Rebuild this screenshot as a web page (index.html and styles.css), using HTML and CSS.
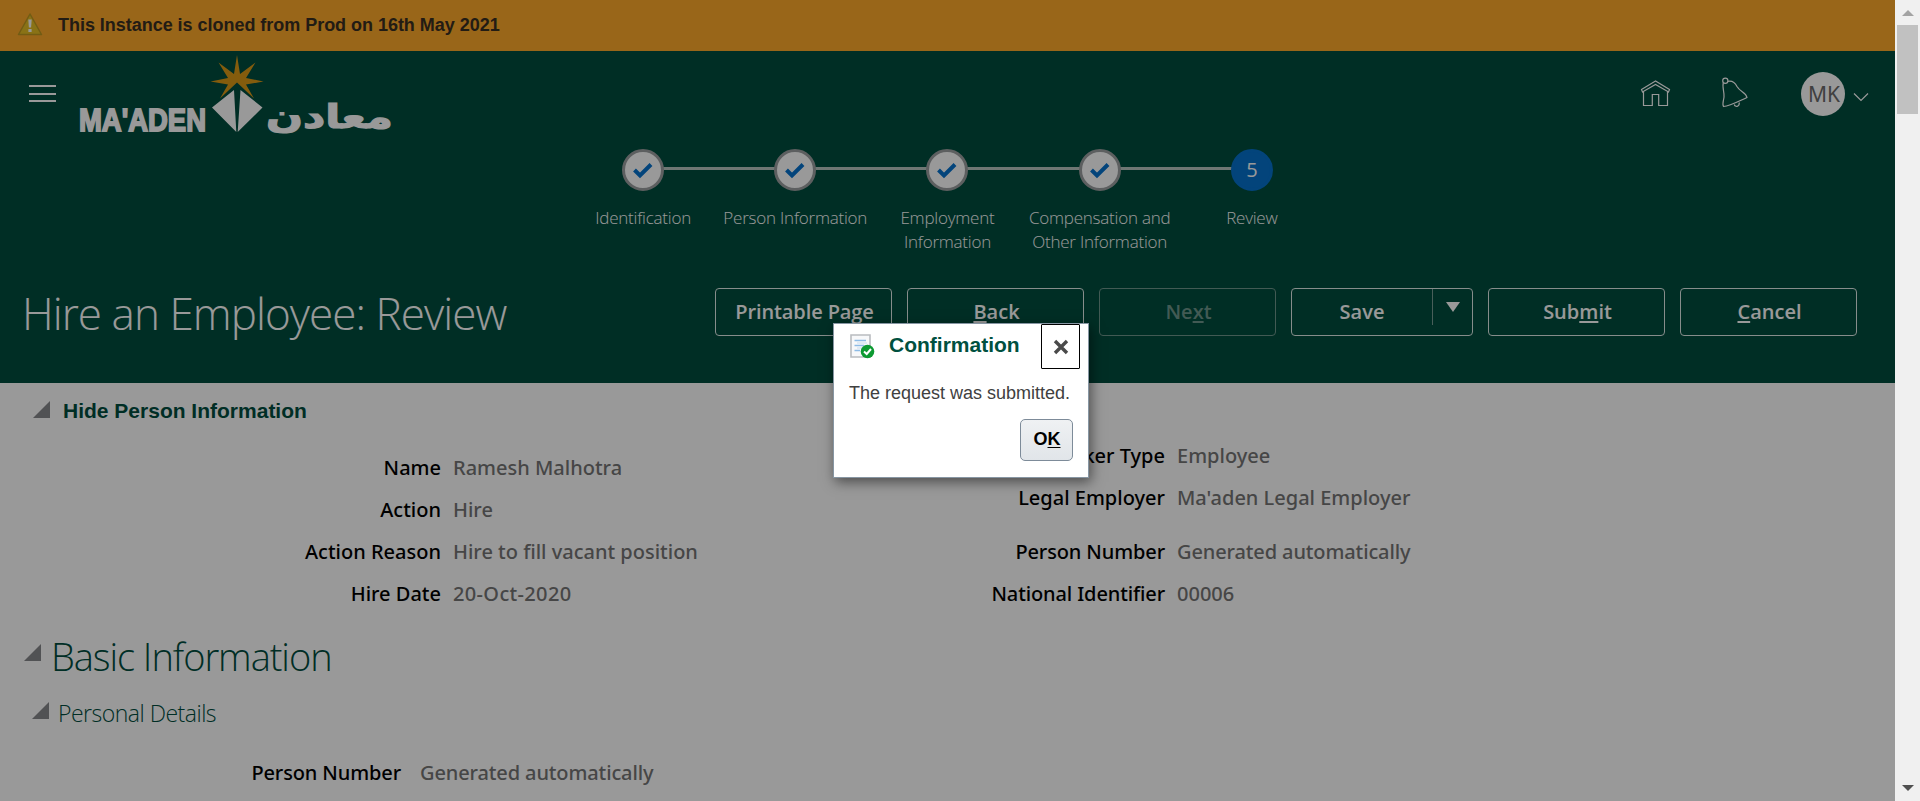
FILE: index.html
```html
<!DOCTYPE html>
<html lang="en">
<head>
<meta charset="utf-8">
<title>Hire an Employee: Review</title>
<link rel="stylesheet" href="styles.css">
</head>
<body>
<div class="window">
  <div class="page">
    <div class="banner">
      <svg class="warn" width="26" height="24" viewBox="0 0 26 24"><path d="M13 2 L24.5 22.5 H1.5 Z" fill="#e5bf25" stroke="#bf9a22" stroke-width="1.5" stroke-linejoin="round"/><path d="M11.3 7.5h3.4l-.6 8h-2.2z" fill="#fff"/><rect x="11.4" y="17" width="3.2" height="3" fill="#fff"/></svg>
      <span>This Instance is cloned from Prod on 16th May 2021</span>
    </div>
    <header class="header">
      <div class="topbar">
        <div class="menu"><i></i><i></i><i></i></div>
        <svg class="logo" width="324" height="90" viewBox="76 52 324 90">
          <path fill="#dd9a17" d="M237 55 L240 74 L255.500 62.500 L246 78 L263.500 81.500 L246 84.500 L254 98.500 L237 82.500 L220 98.500 L228 84.500 L210.500 81.500 L228 78 L218.500 62.500 L234 74 Z"/>
          <path fill="#fff" d="M234 90 L212 107.500 L236.300 132 Z M240.500 90 L262.500 107.500 L237.700 132 Z"/>
          <text class="logo-en" x="79" y="131" textLength="127" lengthAdjust="spacingAndGlyphs">MA'ADEN</text>
          <text class="logo-ar" x="266" y="127.500" textLength="127" lengthAdjust="spacingAndGlyphs">معادن</text>
        </svg>
        <div class="tools">
          <svg class="home" width="32" height="30" viewBox="1640 78 32 30"><path d="M1655.500 81 L1641.500 89.500 L1642.500 92 L1655.500 84.500 L1668.500 92 L1669.500 89.500 Z M1643.500 91.500 V105.500 H1652.300 V94.500 H1658.700 V105.500 H1667.500 V91.500"/></svg>
          <svg class="bell" width="32" height="32" viewBox="1720 77 32 32"><circle cx="1725.300" cy="80.700" r="2.600"/><path d="M1723.300 83 C1722 87 1724.500 92 1724 97 C1723.500 101 1722 104 1723.500 106.500 C1730 106 1738 101.500 1747 97.500 C1746 92 1740 92 1737 86.500 C1735 82.500 1732 80.500 1728 81.300 M1734.300 104.500 C1735 107.500 1739.500 107 1739.300 102.500"/></svg>
          <div class="avatar">MK</div>
          <svg class="chev" width="16" height="10" viewBox="0 0 16 10"><path d="M1 1.500 L8 8.500 L15 1.500"/></svg>
        </div>
      </div>
      <div class="train">
        <div class="step"><span class="dot"><svg width="20" height="18" viewBox="0 0 20 18"><path d="M1.500 9 L7 14.500 L18 3.500"/></svg></span><span>Identification</span></div>
        <div class="step"><span class="dot"><svg width="20" height="18" viewBox="0 0 20 18"><path d="M1.500 9 L7 14.500 L18 3.500"/></svg></span><span>Person Information</span></div>
        <div class="step"><span class="dot"><svg width="20" height="18" viewBox="0 0 20 18"><path d="M1.500 9 L7 14.500 L18 3.500"/></svg></span><span>Employment<br>Information</span></div>
        <div class="step"><span class="dot"><svg width="20" height="18" viewBox="0 0 20 18"><path d="M1.500 9 L7 14.500 L18 3.500"/></svg></span><span>Compensation and<br>Other Information</span></div>
        <div class="step"><span class="dot current">5</span><span>Review</span></div>
      </div>
      <div class="titlebar">
        <h1>Hire an Employee: Review</h1>
        <div class="actions">
          <div class="btn">Printable Page</div>
          <div class="btn"><span><u>B</u>ack</span></div>
          <div class="btn disabled"><span>Ne<u>x</u>t</span></div>
          <div class="btn split"><span class="label">Save</span><span class="drop"><svg width="14" height="10" viewBox="0 0 14 10"><path d="M0 0H14L7 10Z"/></svg></span></div>
          <div class="btn narrow"><span>Sub<u>m</u>it</span></div>
          <div class="btn narrow"><span><u>C</u>ancel</span></div>
        </div>
      </div>
    </header>
    <main class="content">
      <h2 class="hide-head"><svg class="tri" width="17" height="17" viewBox="0 0 17 17"><path d="M0 17L17 0V17Z"/></svg>Hide Person Information</h2>
      <div class="columns">
        <dl class="fields left">
          <dt>Name</dt><dd>Ramesh Malhotra</dd>
          <dt>Action</dt><dd>Hire</dd>
          <dt>Action Reason</dt><dd>Hire to fill vacant position</dd>
          <dt>Hire Date</dt><dd class="date">20-Oct-2020</dd>
        </dl>
        <dl class="fields right">
          <dt>Worker Type</dt><dd>Employee</dd>
          <dt>Legal Employer</dt><dd>Ma'aden Legal Employer</dd>
          <dt class="spaced tight">Person Number</dt><dd class="spaced tight">Generated automatically</dd>
          <dt class="tight">National Identifier</dt><dd>00006</dd>
        </dl>
      </div>
      <h2 class="basic"><svg class="tri" width="17" height="17" viewBox="0 0 17 17"><path d="M0 17L17 0V17Z"/></svg>Basic Information</h2>
      <h3 class="personal"><svg class="tri" width="17" height="17" viewBox="0 0 17 17"><path d="M0 17L17 0V17Z"/></svg>Personal Details</h3>
      <dl class="fields details"><dt class="tight">Person Number</dt><dd class="tight">Generated automatically</dd></dl>
    </main>
    <div class="glass"></div>
    <div class="dialog">
      <div class="dialog-head">
        <svg class="doc" width="26" height="26" viewBox="0 0 26 26"><path d="M1 1H20V23H1Z" fill="#f7f8fa" stroke="#b9bcc0" stroke-width="1.600"/><path d="M4.500 6.500H16M4.500 11.500H14M4.500 16.500H10" stroke="#8dbbe6" stroke-width="1.600"/><path d="M7 9H17M7 14H12" stroke="#c9dcef"/><circle cx="17.500" cy="17.500" r="6.800" fill="#0d9a32"/><path d="M14 17.500L16.700 20L21 15" fill="none" stroke="#fff" stroke-width="2"/></svg>
        <span class="dialog-title">Confirmation</span>
        <span class="close"><svg width="16" height="16" viewBox="0 0 16 16"><path d="M2 2L14 14M14 2L2 14"/></svg></span>
      </div>
      <p>The request was submitted.</p>
      <div class="ok"><span>O<u>K</u></span></div>
    </div>
  </div>
  <div class="scroll">
    <svg width="12" height="6" viewBox="0 0 12 6"><path d="M0 6L6 0L12 6Z" fill="#a3a3a3"/></svg>
    <div class="thumb"></div>
    <svg class="down" width="12" height="6" viewBox="0 0 12 6"><path d="M0 0H12L6 6Z" fill="#505050"/></svg>
  </div>
</div>
</body>
</html>
```
FILE: styles.css
```css
* { box-sizing: border-box; }
body, h1, h2, h3, dl, dd, p { margin: 0; }
body { overflow: hidden; font-family: "Liberation Sans", sans-serif; }
svg { display: block; flex: none; }

.window { display: flex; width: 1920px; height: 801px; }
.page { position: relative; width: 1895px; height: 801px; overflow: hidden; background: #fff; }

.banner { display: flex; align-items: center; height: 51px; padding: 0 0 1px 17px; gap: 15px; background: #ffaa2b; color: #3a2f22; font-size: 18px; font-weight: 700; letter-spacing: -0.030px; }
.warn { margin-top: -2px; }

.header { height: 332px; background: #004d3e; color: #fff; }
.topbar { display: flex; height: 98px; padding: 1px 26px 0 29px; }
.menu { display: flex; flex-direction: column; gap: 5.500px; width: 27px; margin: 33px 20px 0 0; }
.menu i { height: 2px; background: #fff; }
.logo { overflow: visible; }
.logo-en { font: 700 32px "Liberation Sans", sans-serif; fill: #fff; stroke: #fff; stroke-width: 1.800; }
.logo-ar { font: 700 33px "DejaVu Sans", sans-serif; fill: #fff; stroke: #fff; stroke-width: 1.200; }
.tools { display: flex; margin-left: auto; }
.tools path, .tools circle { fill: none; stroke: #fff; stroke-width: 1.200; }
.home { margin: 26px 48px 0 0; }
.bell { margin: 25px 49px 0 0; }
.avatar { display: flex; align-items: center; justify-content: center; width: 44px; height: 44px; margin: 20px 8px 0 0; padding-left: 2px; border-radius: 50%; background: #fff; color: #6b6b6b; font: 21px "Noto Sans", sans-serif; }
.chev { margin-top: 40px; }

.train { display: grid; grid-template-columns: repeat(5, 152.200px); width: 761px; height: 139px; margin-left: 567px; background: linear-gradient(#b9c6c2, #b9c6c2) 76px 18px / 609px 3px no-repeat; }
.step { display: flex; flex-direction: column; align-items: center; text-align: center; font: 300 17px/24px "Open Sans", "Noto Sans", sans-serif; letter-spacing: -0.220px; white-space: nowrap; }
.dot { display: flex; align-items: center; justify-content: center; width: 42px; height: 42px; margin-bottom: 15px; border: 3px solid #9b9fa0; border-radius: 50%; background: #fff; }
.dot path { fill: none; stroke: #0572ce; stroke-width: 4; }
.dot.current { border-color: #0572ce; background: #0572ce; font-size: 20px; font-weight: 400; }

.titlebar { display: flex; justify-content: space-between; height: 48px; padding: 0 38px 0 22px; }
h1 { font: 300 44px/51px "Open Sans", "Noto Sans", sans-serif; letter-spacing: -0.950px; white-space: nowrap; }
.actions { display: flex; gap: 15px; }
.btn { display: flex; align-items: center; justify-content: center; width: 177px; height: 48px; padding: 0 0 2px 2px; border: 1px solid #e0ebe8; border-radius: 4px; font: 600 20px "Open Sans", "Noto Sans", sans-serif; }
.btn:first-child { letter-spacing: -0.100px; }
.btn.disabled { border-color: #6f968c; color: #6f968c; }
.btn.split { width: 182px; padding-left: 0; align-items: stretch; }
.split .label { display: flex; align-items: center; justify-content: center; width: 140px; }
.split .drop { width: 40px; height: 36px; padding: 13px 0 0 13px; border-left: 1px solid #7b9f96; }
.drop path { fill: #fff; }
u { text-decoration-thickness: 2px; text-underline-offset: 2px; text-decoration-skip-ink: none; }

.tri path { fill: #87898c; }
.hide-head { display: flex; gap: 13px; height: 52px; padding: 12px 0 0 33px; color: #004d3e; font-size: 21px; line-height: 32px; }
.hide-head .tri { margin-top: 6px; }
.columns { display: flex; }
.fields { display: grid; column-gap: 12px; grid-auto-rows: min-content; font: 500 20px/42px "Noto Sans", sans-serif; white-space: nowrap; }
.fields dt { text-align: right; color: #000; }
.fields dd { color: #757575; }
.fields .tight { letter-spacing: -0.120px; }
.fields .date { letter-spacing: 0.350px; }
.left { grid-template-columns: 441px 272px; padding-top: 12px; }
.right { grid-template-columns: 440px 300px; }
.spaced { margin-top: 12px; }
.basic { display: flex; gap: 10px; margin-top: 13px; padding-left: 24px; color: #004d3e; font: 300 38px/56px "Open Sans", "Noto Sans", sans-serif; letter-spacing: -1.050px; }
.basic .tri { margin-top: 16px; }
.personal { display: flex; gap: 9px; margin-top: 14px; padding-left: 32px; color: #004d3e; font: 300 23px/30px "Open Sans", "Noto Sans", sans-serif; letter-spacing: -0.500px; }
.personal .tri { margin-top: 4px; }
.details { grid-template-columns: 401px 300px; column-gap: 19px; margin-top: 24px; }

.glass { position: absolute; inset: 0; background: rgba(0, 0, 0, 0.4); }
.dialog { position: absolute; left: 833px; top: 323px; width: 256px; height: 155px; padding: 0 8px 0 15px; border: 1px solid #8796a3; background: #fff; box-shadow: 2px 4px 12px rgba(0, 0, 0, 0.5); }
.dialog-head { display: flex; height: 45px; }
.doc { margin: 10px 13px 0 1px; }
.dialog-title { color: #00503f; font-size: 21px; font-weight: 700; line-height: 42px; }
.close { display: flex; align-items: center; justify-content: center; width: 39px; height: 45px; margin-left: auto; border: 1px solid #000; border-radius: 1px; }
.close path { stroke: #4a4a4a; stroke-width: 3.400; }
.dialog p { color: #404040; font-size: 18px; line-height: 49px; white-space: nowrap; }
.ok { display: flex; align-items: center; justify-content: center; width: 53px; height: 42px; margin: 1px 7px 0 auto; padding: 0 0 2px 1px; border: 1px solid #7d8b99; border-radius: 5px; background: linear-gradient(#eff1f3, #e1e5e9); color: #000; font-size: 18px; font-weight: 700; }
.ok u { text-decoration-thickness: 1px; }

.scroll { display: flex; flex-direction: column; align-items: center; width: 25px; height: 801px; padding: 10px 0; background: #f0f0f0; }
.thumb { width: 21px; height: 89px; margin-top: 9px; background: #c1c1c1; }
.down { margin-top: auto; }
```
